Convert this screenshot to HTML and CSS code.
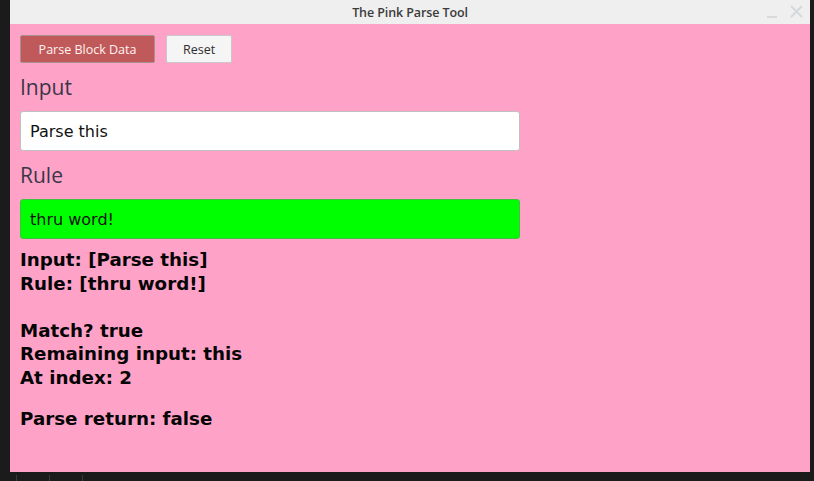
FILE: index.html
```html
<!DOCTYPE html>
<html>
<head>
<meta charset="utf-8">
<link rel="stylesheet" href="styles.css">
</head>
<body>
<div class="desktop">
  <div class="window">
    <div class="titlebar">
      <span class="title">The Pink Parse Tool</span>
      <div class="controls">
        <span class="min"></span>
        <svg class="close" width="13" height="13" viewBox="0 0 13 13"><path d="M1.5 1.5 L11.5 11.5 M11.5 1.5 L1.5 11.5" stroke="#d4d9dc" stroke-width="2" stroke-linecap="round"/></svg>
      </div>
    </div>
    <div class="content">
      <div class="buttons">
        <button class="btn primary">Parse Block Data</button>
        <button class="btn">Reset</button>
      </div>
      <div class="label">Input</div>
      <div class="field">Parse this</div>
      <div class="label">Rule</div>
      <div class="field green">thru word!</div>
      <div class="output">
        <p>Input: [Parse this]<br>Rule: [thru word!]<br><br>Match? true<br>Remaining input: this<br>At index: 2</p>
        <p>Parse return: false</p>
      </div>
    </div>
  </div>
  <div class="taskbar">
    <span class="sep s1"></span><span class="sep s2"></span><span class="sep s3"></span>
  </div>
</div>
</body>
</html>
```
FILE: styles.css
```css
html, body {
  margin: 0;
  padding: 0;
  background: #1b1b1b;
  width: 814px;
  height: 481px;
  overflow: hidden;
}
.desktop {
  width: 814px;
  height: 481px;
  padding-left: 10px;
  box-sizing: border-box;
  display: flex;
  flex-direction: column;
}
.window {
  width: 800px;
  height: 472px;
  background: #ffa2c8;
  display: flex;
  flex-direction: column;
}
.titlebar {
  height: 24px;
  background: #efefef;
  position: relative;
  display: flex;
  align-items: center;
  justify-content: center;
}
.title {
  font-family: "Open Sans", "DejaVu Sans", sans-serif;
  font-weight: 600;
  font-size: 12.5px;
  color: #3b3b3b;
  letter-spacing: -0.1px;
}
.controls {
  position: absolute;
  right: 7px;
  top: 5px;
  display: flex;
  align-items: center;
  gap: 13px;
}
.min {
  width: 10px;
  height: 2px;
  background: #d6dadd;
  margin-top: 10px;
}
.close { display: block; }
.content {
  padding: 11px 10px 0 10px;
  display: flex;
  flex-direction: column;
}
.buttons {
  display: flex;
  gap: 11px;
}
.btn {
  height: 28px;
  padding: 0 16px;
  font-family: "Open Sans", "DejaVu Sans", sans-serif;
  font-size: 12.5px;
  border: 1px solid #c8c8c8;
  border-radius: 2px;
  background: #f5f5f5;
  color: #2e2e2e;
}
.btn.primary {
  background: #c05a5a;
  color: #fff2f2;
  border-color: #a89090;
  width: 135px;
}
.btn:not(.primary) { width: 66px; }
.label {
  font-family: "Open Sans", "DejaVu Sans", sans-serif;
  font-size: 21px;
  color: #3a3646;
  margin-top: 11px;
  height: 27px;
  line-height: 27px;
}
.field {
  margin-top: 10px;
  width: 500px;
  height: 40px;
  box-sizing: border-box;
  background: #fff;
  border: 1px solid #c0c0c0;
  border-radius: 3px;
  padding-left: 9px;
  display: flex;
  align-items: center;
  font-family: "DejaVu Sans", sans-serif;
  font-size: 16px;
  color: #111;
}
.field.green {
  background: #00ff00;
  border-color: #3ec23e;
}
.output {
  font-family: "DejaVu Sans", sans-serif;
  font-weight: bold;
  font-size: 18.25px;
  line-height: 23.5px;
  color: #050505;
  margin-top: 9px;
}
.output p { margin: 0 0 18px 0; }
.taskbar {
  height: 9px;
  position: relative;
}
.sep {
  position: absolute;
  top: 3px;
  width: 1px;
  height: 6px;
  background: #3a3a3a;
}
.s1 { left: 6px; }
.s2 { left: 39px; }
.s3 { left: 72px; }
```
